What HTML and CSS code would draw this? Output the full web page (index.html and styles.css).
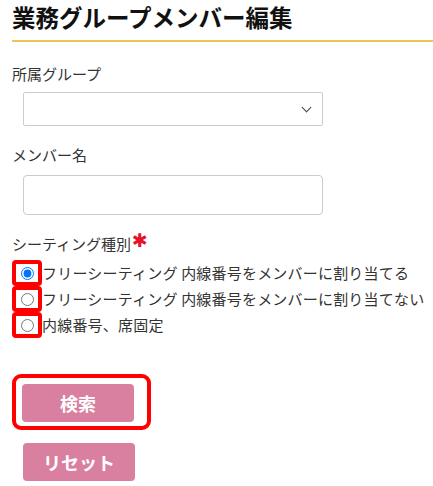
FILE: index.html
```html
<!DOCTYPE html>
<html lang="ja">
  <head>
    <meta charset="UTF-8" />
    <meta name="viewport" content="width=device-width, initial-scale=1.0" />
    <title>業務グループメンバー編集</title>
    <link rel="stylesheet" href="styles.css">
  </head>
  <body>
    <div class="page">
      <h1 class="page-title">業務グループメンバー編集</h1>

      <div class="field">
        <label class="field-label">所属グループ</label>
        <div class="select-wrap">
          <select class="select-box"><option></option></select>
        </div>
      </div>

      <div class="field">
        <label class="field-label">メンバー名</label>
        <input class="text-box" type="text" />
      </div>

      <div class="field">
        <label class="field-label">シーティング種別<span class="required">✱</span></label>
        <div class="radio-list">
          <label class="radio-row">
            <span class="mark"><input type="radio" name="seat" checked /></span>フリーシーティング 内線番号をメンバーに割り当てる
          </label>
          <label class="radio-row">
            <span class="mark"><input type="radio" name="seat" /></span>フリーシーティング 内線番号をメンバーに割り当てない
          </label>
          <label class="radio-row">
            <span class="mark"><input type="radio" name="seat" /></span>内線番号、席固定
          </label>
        </div>
      </div>

      <div class="actions">
        <div class="mark-btn">
          <button class="btn">検索</button>
        </div>
        <button class="btn btn-reset">リセット</button>
      </div>
    </div>
  </body>
</html>
```

FILE: styles.css
```css
body {
  margin: 0;
  background: #fff;
  color: #333;
  font-family: "Noto Sans CJK JP", "Noto Sans", sans-serif;
}

.page {
  padding: 0 0 0 12px;
}

.page-title {
  margin: 0;
  padding: 2px 0 8px;
  font-size: 23.5px;
  line-height: 30px;
  font-weight: bold;
  color: #111;
  border-bottom: 2px solid #f0c35a;
}

.field {
  margin-top: 21px;
}

.field + .field {
  margin-top: 18px;
}

.field-label {
  display: block;
  font-size: 15px;
  line-height: 22px;
  color: #333;
}

.required {
  color: #e8102a;
  font-family: "DejaVu Sans", sans-serif;
  font-size: 19px;
  line-height: 14px;
  margin-left: 1px;
  vertical-align: 3px;
}

.select-wrap {
  position: relative;
  width: 300px;
  margin: 7px 0 0 11px;
}

.select-wrap::after {
  content: "";
  position: absolute;
  right: 13px;
  top: 12px;
  width: 6px;
  height: 6px;
  border-right: 1.5px solid #444;
  border-bottom: 1.5px solid #444;
  transform: rotate(45deg);
}

.select-box {
  display: block;
  width: 300px;
  height: 34px;
  appearance: none;
  background: #fff;
  border: 1px solid #ccc;
  border-radius: 2px;
}

.text-box {
  display: block;
  box-sizing: border-box;
  width: 300px;
  height: 40px;
  margin: 9px 0 0 11px;
  border: 1px solid #ccc;
  border-radius: 4px;
}

.radio-list {
  margin-top: 5px;
}

.radio-row {
  display: flex;
  align-items: center;
  font-size: 15px;
  line-height: 20px;
  color: #333;
  white-space: nowrap;
  letter-spacing: 0.2px;
}

.mark {
  display: flex;
  align-items: center;
  justify-content: center;
  box-sizing: border-box;
  width: 30px;
  height: 26px;
  border: 4px solid #f00;
  border-radius: 4px;
}

.mark input {
  margin: 0;
  width: 13px;
  height: 13px;
}

.actions {
  margin-top: 36px;
}

.mark-btn {
  display: inline-block;
  padding: 6px 13px 4px 6px;
  border: 4px solid #f00;
  border-radius: 9px;
}

.btn {
  display: block;
  width: 112px;
  height: 38px;
  background: #d97f9f;
  color: #fff;
  border: none;
  border-radius: 4px;
  font-family: "Noto Sans CJK JP", sans-serif;
  font-size: 18px;
  font-weight: bold;
}

.btn-reset {
  margin: 13px 0 0 11px;
}
```
